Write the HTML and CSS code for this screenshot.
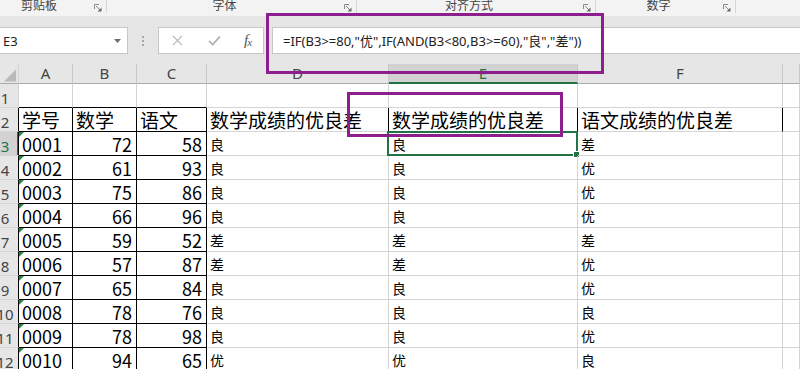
FILE: index.html
```html
<!DOCTYPE html>
<html lang="zh-CN">
<head>
    <meta charset="UTF-8">
    <title>IF 函数 优良差</title>
    <link rel="stylesheet" href="styles.css">
</head>
<body>
<div class="page">
    <div class="ribbon">
        <div class="group g1"><span class="group-label">剪贴板</span><svg class="launcher" viewBox="0 0 8 8"><path d="M0.5 5V0.5H5" fill="none" stroke="#8a8a8a"/><path d="M2 2L6 6" stroke="#8a8a8a"/><path d="M7.5 3.5V7.5H3.5Z" fill="#6a6a6a"/></svg></div>
        <div class="group g2"><span class="group-label">字体</span><svg class="launcher" viewBox="0 0 8 8"><path d="M0.5 5V0.5H5" fill="none" stroke="#8a8a8a"/><path d="M2 2L6 6" stroke="#8a8a8a"/><path d="M7.5 3.5V7.5H3.5Z" fill="#6a6a6a"/></svg></div>
        <div class="group g3"><span class="group-label">对齐方式</span><svg class="launcher" viewBox="0 0 8 8"><path d="M0.5 5V0.5H5" fill="none" stroke="#8a8a8a"/><path d="M2 2L6 6" stroke="#8a8a8a"/><path d="M7.5 3.5V7.5H3.5Z" fill="#6a6a6a"/></svg></div>
        <div class="group g4"><span class="group-label">数字</span><svg class="launcher" viewBox="0 0 8 8"><path d="M0.5 5V0.5H5" fill="none" stroke="#8a8a8a"/><path d="M2 2L6 6" stroke="#8a8a8a"/><path d="M7.5 3.5V7.5H3.5Z" fill="#6a6a6a"/></svg></div>
        <div class="group g5"></div>
    </div>

    <div class="formula-row">
        <div class="name-box">
            <span>E3</span>
            <svg class="drop" viewBox="0 0 7 4"><path d="M0 0H7L3.5 4Z" fill="#6e6e6e"/></svg>
        </div>
        <div class="grip"><i></i><i></i><i></i></div>
        <div class="fx-buttons">
            <svg class="btn" viewBox="0 0 12 12"><path d="M1 1L11 11M11 1L1 11" stroke="#b4b4b4" stroke-width="1.3"/></svg>
            <svg class="btn" viewBox="0 0 14 12"><path d="M1 6.5L5 10.5L13 1.5" fill="none" stroke="#b4b4b4" stroke-width="2"/></svg>
            <span class="fx">f<sub>x</sub></span>
        </div>
        <div class="formula">=IF(B3&gt;=80,"优",IF(AND(B3&lt;80,B3&gt;=60),"良","差"))</div>
    </div>

    <div class="sheet">
        <div class="corner"><svg viewBox="0 0 12 12"><path d="M12 0V12H0Z" fill="#b9b9b9"/></svg></div>
        <div class="col-head">A</div>
        <div class="col-head">B</div>
        <div class="col-head">C</div>
        <div class="col-head">D</div>
        <div class="col-head active">E</div>
        <div class="col-head">F</div>
        <div class="col-head"></div>

        <div class="row-head"><span>1</span></div>
        <div class="cell bb"></div><div class="cell bb"></div><div class="cell bb"></div>
        <div class="cell"></div><div class="cell"></div><div class="cell"></div><div class="cell"></div>

        <div class="row-head edge"><span>2</span></div>
        <div class="cell big box">学号</div>
        <div class="cell big box">数学</div>
        <div class="cell big box">语文</div>
        <div class="cell big br">数学成绩的优良差</div>
        <div class="cell big br">数学成绩的优良差</div>
        <div class="cell big br">语文成绩的优良差</div>
        <div class="cell"></div>

        <div class="row-head edge active"><span>3</span></div>
        <div class="cell num box txt">0001</div>
        <div class="cell num box right">72</div>
        <div class="cell num box right">58</div>
        <div class="cell">良</div>
        <div class="cell selected">良<span class="sel"><i class="handle"></i></span></div>
        <div class="cell">差</div>
        <div class="cell"></div>

        <div class="row-head edge"><span>4</span></div>
        <div class="cell num box txt">0002</div>
        <div class="cell num box right">61</div>
        <div class="cell num box right">93</div>
        <div class="cell">良</div><div class="cell">良</div><div class="cell">优</div><div class="cell"></div>

        <div class="row-head edge"><span>5</span></div>
        <div class="cell num box txt">0003</div>
        <div class="cell num box right">75</div>
        <div class="cell num box right">86</div>
        <div class="cell">良</div><div class="cell">良</div><div class="cell">优</div><div class="cell"></div>

        <div class="row-head edge"><span>6</span></div>
        <div class="cell num box txt">0004</div>
        <div class="cell num box right">66</div>
        <div class="cell num box right">96</div>
        <div class="cell">良</div><div class="cell">良</div><div class="cell">优</div><div class="cell"></div>

        <div class="row-head edge"><span>7</span></div>
        <div class="cell num box txt">0005</div>
        <div class="cell num box right">59</div>
        <div class="cell num box right">52</div>
        <div class="cell">差</div><div class="cell">差</div><div class="cell">差</div><div class="cell"></div>

        <div class="row-head edge"><span>8</span></div>
        <div class="cell num box txt">0006</div>
        <div class="cell num box right">57</div>
        <div class="cell num box right">87</div>
        <div class="cell">差</div><div class="cell">差</div><div class="cell">优</div><div class="cell"></div>

        <div class="row-head edge"><span>9</span></div>
        <div class="cell num box txt">0007</div>
        <div class="cell num box right">65</div>
        <div class="cell num box right">84</div>
        <div class="cell">良</div><div class="cell">良</div><div class="cell">优</div><div class="cell"></div>

        <div class="row-head edge"><span>10</span></div>
        <div class="cell num box txt">0008</div>
        <div class="cell num box right">78</div>
        <div class="cell num box right">76</div>
        <div class="cell">良</div><div class="cell">良</div><div class="cell">良</div><div class="cell"></div>

        <div class="row-head edge"><span>11</span></div>
        <div class="cell num box txt">0009</div>
        <div class="cell num box right">78</div>
        <div class="cell num box right">98</div>
        <div class="cell">良</div><div class="cell">良</div><div class="cell">优</div><div class="cell"></div>

        <div class="row-head edge"><span>12</span></div>
        <div class="cell num box txt">0010</div>
        <div class="cell num box right">94</div>
        <div class="cell num box right">65</div>
        <div class="cell">优</div><div class="cell">优</div><div class="cell">良</div><div class="cell"></div>
    </div>

    <div class="mark mark-formula"></div>
    <div class="mark mark-title"></div>
</div>
</body>
</html>
```

FILE: styles.css
```css
body {
    margin: 0;
    background: #ffffff;
    font-family: "Noto Sans", "Noto Sans CJK SC", sans-serif;
    overflow: hidden;
}

.page {
    position: relative;
    width: 800px;
    height: 369px;
    overflow: hidden;
}

/* ribbon group captions */
.ribbon {
    display: flex;
    height: 16px;
    background: #f3f3f3;
    color: #444;
    font-size: 12px;
    line-height: 12px;
}

.group {
    display: flex;
    align-items: flex-start;
    height: 13px;
    border-right: 1px solid #d6d6d6;
    box-sizing: border-box;
}

.group-label {
    flex: 1;
    text-align: center;
    margin-top: -1px;
    font-family: "Noto Sans CJK SC", sans-serif;
}

.launcher {
    width: 8px;
    height: 8px;
    margin: 4px 4px 0 2px;
}

.g1 { width: 107px; }
.g1 .group-label { padding-right: 14px; }
.g2 { width: 250px; }
.g3 { width: 239px; }
.g4 { width: 140px; }
.g5 { flex: 1; border-right: none; }

/* name box + formula bar */
.formula-row {
    display: flex;
    align-items: flex-start;
    height: 48px;
    padding-top: 11px;
    box-sizing: border-box;
    background: #e6e6e6;
}

.name-box,
.fx-buttons,
.formula {
    height: 27px;
    box-sizing: border-box;
    background: #fff;
    border: 1px solid #c6c6c6;
    display: flex;
    align-items: center;
}

.name-box {
    width: 129px;
    margin-left: -1px;
    padding-left: 3px;
    font-size: 13px;
    color: #222;
}

.name-box span {
    flex: 1;
}

.drop {
    width: 7px;
    height: 4px;
    margin-right: 6px;
}

.grip {
    width: 30px;
    height: 27px;
    display: flex;
    flex-direction: column;
    align-items: center;
    justify-content: center;
    gap: 2px;
}

.grip i {
    width: 2px;
    height: 2px;
    background: #a8a8a8;
}

.fx-buttons {
    width: 106px;
    padding-left: 13px;
    gap: 0;
}

.btn {
    width: 11px;
    height: 11px;
    margin-right: 25px;
}

.btn + .btn {
    width: 13px;
    margin-right: 23px;
}

.fx {
    font-family: "Liberation Serif", serif;
    font-style: italic;
    font-size: 15px;
    color: #555;
    letter-spacing: -1px;
}

.fx sub {
    font-size: 11px;
    vertical-align: -1px;
}

.formula {
    flex: 1;
    margin-left: 8px;
    margin-right: -2px;
    padding-left: 10px;
    font-size: 13px;
    color: #222;
    white-space: nowrap;
}

/* worksheet grid */
.sheet {
    display: grid;
    grid-template-columns: 19px 54px 64px 70px 182px 189px 205px 1fr;
    grid-template-rows: 20px;
    grid-auto-rows: 24px;
    background: #fff;
}

.sheet > div {
    border-right: 1px solid #d4d4d4;
    border-bottom: 1px solid #d4d4d4;
    box-sizing: border-box;
    position: relative;
}

.corner {
    background: #e6e6e6;
    display: flex;
    align-items: flex-end;
    justify-content: flex-end;
    border-bottom-color: #ababab !important;
}

.corner svg {
    width: 12px;
    height: 13px;
    margin: 0 2px 1px 0;
}

.col-head {
    background: #e6e6e6;
    border-bottom-color: #ababab !important;
    border-right-color: #c8c8c8 !important;
    color: #444;
    font-size: 15px;
    text-align: center;
    line-height: 19px;
}

.col-head.active {
    background: #d2d2d2;
    color: #217346;
    border-bottom: 2px solid #217346 !important;
}

.row-head {
    background: #e6e6e6;
    color: #444;
    font-size: 15px;
    display: flex;
    justify-content: center;
    align-items: flex-end;
    overflow: hidden;
}

.row-head span {
    width: 10px;
    display: flex;
    justify-content: center;
    line-height: 18px;
    margin-right: 8px;
}

.row-head.edge {
    border-right-color: #000 !important;
}

.row-head.active {
    background: #d2d2d2;
    color: #217346;
    box-shadow: inset -1px 0 0 #217346;
}

.cell {
    font-family: "Noto Sans CJK SC", sans-serif;
    font-size: 14px;
    color: #000;
    display: flex;
    align-items: flex-end;
    padding: 0 3px 1px;
    line-height: 20px;
    white-space: nowrap;
}

.cell.big {
    font-size: 19px;
    line-height: 22px;
    padding-bottom: 0;
}

.cell.num {
    font-size: 18px;
    line-height: 22px;
    padding-bottom: 0;
}

.cell.right {
    justify-content: flex-end;
    padding-right: 4px;
}

.cell.box {
    border-right-color: #000;
    border-bottom-color: #000;
}

.cell.bb {
    border-bottom-color: #000;
}

.cell.br {
    border-right-color: #000;
}

/* number-stored-as-text flag */
.cell.txt::before {
    content: "";
    position: absolute;
    top: 0;
    left: 0;
    border-top: 5px solid #1e8a3a;
    border-right: 5px solid transparent;
}

.sel {
    position: absolute;
    top: -1px;
    left: -2px;
    right: -1px;
    bottom: -1px;
    border: 2px solid #217346;
}

.handle {
    position: absolute;
    right: -4px;
    bottom: -4px;
    width: 5px;
    height: 5px;
    background: #217346;
    border: 1px solid #fff;
}

/* annotation frames */
.mark {
    position: absolute;
    border: 3px solid #8c1e8d;
    box-sizing: border-box;
}

.mark-formula {
    left: 266px;
    top: 13px;
    width: 338px;
    height: 61px;
}

.mark-title {
    left: 347px;
    top: 92px;
    width: 216px;
    height: 45px;
}
```
